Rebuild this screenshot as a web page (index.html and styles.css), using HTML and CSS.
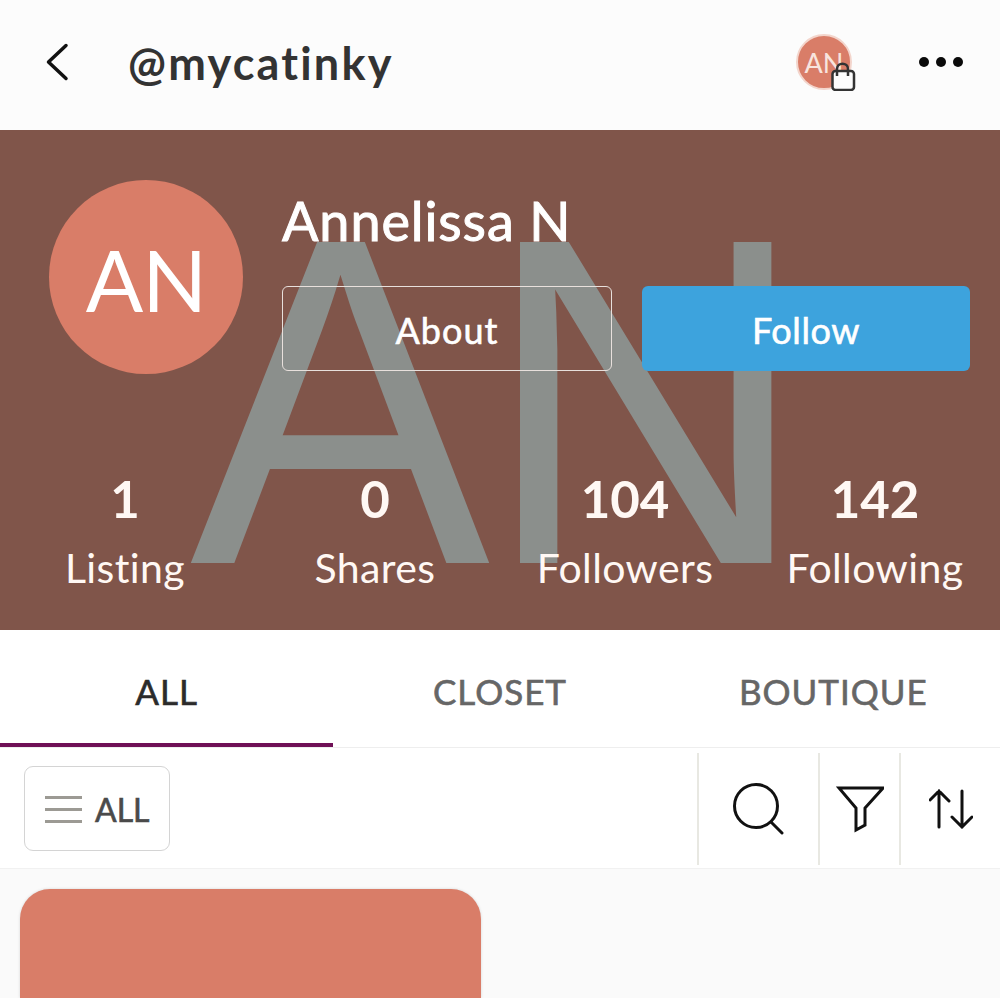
FILE: index.html
```html
<!DOCTYPE html>
<html>

<head>
  <link rel="stylesheet" href="styles.css">
</head>

<body>
  <header class="top-bar">
    <svg class="back-icon" width="24" height="40" viewBox="0 0 24 40">
      <path d="M20 3.5 L2.5 20 L20 36.5" />
    </svg>
    <div class="handle">@mycatinky</div>
    <div class="top-avatar">
      AN
      <svg class="bag-icon" width="28" height="30" viewBox="0 0 28 30">
        <rect x="3.5" y="10" width="21.5" height="19" rx="3" />
        <path d="M8 15 V8 C8 1 19 1 19 8 V15" />
      </svg>
    </div>
    <div class="dots"><span></span><span></span><span></span></div>
  </header>

  <section class="profile">
    <div class="watermark">AN</div>
    <div class="profile-top">
      <div class="avatar">AN</div>
      <div class="profile-main">
        <h1>Annelissa N</h1>
        <div class="actions">
          <button class="btn btn-about">About</button>
          <button class="btn btn-follow">Follow</button>
        </div>
      </div>
    </div>
    <div class="stats">
      <div class="stat"><b>1</b><span>Listing</span></div>
      <div class="stat"><b>0</b><span>Shares</span></div>
      <div class="stat"><b>104</b><span>Followers</span></div>
      <div class="stat"><b>142</b><span>Following</span></div>
    </div>
  </section>

  <nav class="tabs">
    <div class="tab active">ALL</div>
    <div class="tab">CLOSET</div>
    <div class="tab">BOUTIQUE</div>
  </nav>

  <div class="toolbar">
    <button class="all-btn">
      <span class="bars"><i></i><i></i><i></i></span>
      ALL
    </button>
    <div class="tools">
      <div class="tool tool-search">
        <svg width="52" height="52" viewBox="0 0 52 52">
          <circle cx="23" cy="23" r="21.5" />
          <path d="M38 39 L49 50" />
        </svg>
      </div>
      <div class="tool tool-filter">
        <svg width="48" height="48" viewBox="0 0 48 48">
          <path d="M3 3 H47 L29 23 V40 L20 45 V23 Z" />
        </svg>
      </div>
      <div class="tool tool-sort">
        <svg width="44" height="40" viewBox="0 0 44 40">
          <path d="M10 38 V2 M1 11 L10 2 L20 12" />
          <path d="M33 2 V38 M23 28 L33 38 L43 28" />
        </svg>
      </div>
    </div>
  </div>

  <main class="listing-area">
    <div class="listing-card"></div>
  </main>
</body>

</html>
```

FILE: styles.css
```css
* {
  box-sizing: border-box;
}

html,
body {
  height: 100%;
}

body {
  margin: 0;
  overflow: hidden;
  background: #fafafa;
  font-family: Lato, 'Open Sans', sans-serif;
}

.top-bar {
  display: flex;
  align-items: center;
  height: 130px;
  background: #fcfcfc;
  padding-left: 46px;
}

.back-icon {
  margin-top: -6px;
}

.back-icon path {
  fill: none;
  stroke: #111;
  stroke-width: 3.5;
  stroke-linecap: round;
  stroke-linejoin: round;
}

.handle {
  margin-left: 58px;
  margin-top: -4px;
  font-size: 45px;
  font-weight: 700;
  letter-spacing: 2.2px;
  color: #333;
}

.top-avatar {
  position: relative;
  display: flex;
  align-items: center;
  justify-content: center;
  width: 56px;
  height: 56px;
  margin-left: auto;
  margin-top: -6px;
  border-radius: 50%;
  background: #d97d68;
  border: 2px solid #f3d5cc;
  color: #f8e4de;
  font-size: 27px;
}

.bag-icon {
  position: absolute;
  right: -7px;
  bottom: -3px;
}

.bag-icon rect {
  fill: #fcfcfc;
  stroke: #333;
  stroke-width: 2.5;
}

.bag-icon path {
  fill: none;
  stroke: #333;
  stroke-width: 2.5;
}

.dots {
  display: flex;
  gap: 7px;
  margin-left: 67px;
  margin-right: 37px;
  margin-top: -6px;
}

.dots span {
  width: 10px;
  height: 10px;
  border-radius: 50%;
  background: #0a0a0a;
}

.profile {
  position: relative;
  height: 500px;
  overflow: hidden;
  background: #80554a;
  color: #fff;
}

.watermark {
  position: absolute;
  top: 27px;
  left: -9px;
  right: 0;
  height: 470px;
  text-align: center;
  font-family: 'Liberation Sans', Arial, sans-serif;
  font-size: 450px;
  letter-spacing: -7px;
  line-height: 500px;
  color: #8b8f8c;
  white-space: nowrap;
  filter: blur(0.7px);
  transform: scaleY(1.037);
  transform-origin: 50% 406px;
}

.profile-top {
  position: relative;
  display: flex;
  padding: 50px 30px 0 49px;
}

.avatar {
  display: flex;
  align-items: center;
  justify-content: center;
  width: 194px;
  height: 194px;
  padding-top: 4px;
  border-radius: 50%;
  background: #d97d68;
  font-size: 85px;
  letter-spacing: -1px;
  color: #fff;
}

.profile-main {
  flex: 1;
  margin-left: 39px;
}

h1 {
  margin: 10px 0 0;
  font-size: 54px;
  line-height: 62px;
  font-weight: 400;
  letter-spacing: 0.9px;
  -webkit-text-stroke: 1px #fff;
  color: #fff;
}

.actions {
  display: flex;
  gap: 30px;
  margin-top: 34px;
}

.btn {
  flex: 1;
  height: 85px;
  padding-top: 3px;
  border-radius: 6px;
  font-family: inherit;
  font-size: 36px;
  font-weight: 400;
  letter-spacing: 1px;
  -webkit-text-stroke: 0.6px #fff;
  color: #fff;
}

.btn-about {
  background: transparent;
  border: 1px solid #e8e0dc;
}

.btn-follow {
  background: #3da3dd;
  border: 0;
  letter-spacing: 0.6px;
}

.stats {
  position: relative;
  display: grid;
  grid-template-columns: repeat(4, 1fr);
  margin-top: 94px;
}

.stat {
  display: flex;
  flex-direction: column;
  align-items: center;
  color: #fff8f4;
}

.stat b {
  font-size: 51px;
  line-height: 62px;
}

.stat span {
  margin-top: 13px;
  font-size: 41px;
  line-height: 50px;
  letter-spacing: 0.4px;
  white-space: nowrap;
}

.tabs {
  display: flex;
  height: 118px;
  background: #fff;
  border-bottom: 1px solid #eeeeee;
}

.tab {
  flex: 1;
  padding-top: 39px;
  text-align: center;
  font-size: 35px;
  font-weight: 400;
  line-height: 44px;
  letter-spacing: 1px;
  -webkit-text-stroke: 0.6px #666;
  color: #666;
}

.tab.active {
  color: #2b2b2b;
  -webkit-text-stroke: 0.6px #2b2b2b;
  border-bottom: 4px solid #6f1056;
}

.toolbar {
  display: flex;
  align-items: center;
  justify-content: space-between;
  height: 121px;
  padding: 0 0 0 24px;
  background: #fff;
  border-bottom: 1px solid #f1f1f1;
}

.all-btn {
  display: flex;
  align-items: center;
  gap: 13px;
  width: 146px;
  height: 85px;
  padding: 2px 0 0 20px;
  background: #fff;
  border: 1px solid #d4d4d4;
  border-radius: 9px;
  font-family: inherit;
  font-size: 32px;
  font-weight: 400;
  -webkit-text-stroke: 0.6px #4a4a4a;
  color: #4a4a4a;
}

.bars {
  display: flex;
  flex-direction: column;
  gap: 9px;
}

.bars i {
  display: block;
  width: 37px;
  height: 3px;
  background: #9c9a94;
}

.tools {
  display: flex;
  height: 112px;
  margin-top: 1px;
}

.tool {
  display: flex;
  align-items: center;
  justify-content: center;
  border-left: 2px solid #e8e8e2;
}

.tool-search {
  width: 121px;
}

.tool-filter {
  width: 81px;
}

.tool-sort {
  width: 101px;
}

.tool svg * {
  fill: none;
  stroke: #111;
  stroke-width: 3;
  stroke-linecap: round;
  stroke-linejoin: miter;
}

.listing-area {
  padding: 20px 0 0 20px;
}

.listing-card {
  width: 461px;
  height: 109px;
  border-radius: 30px 30px 0 0;
  background: #d97d68;
  box-shadow: 0 0 3px rgba(0, 0, 0, 0.15);
}
```
